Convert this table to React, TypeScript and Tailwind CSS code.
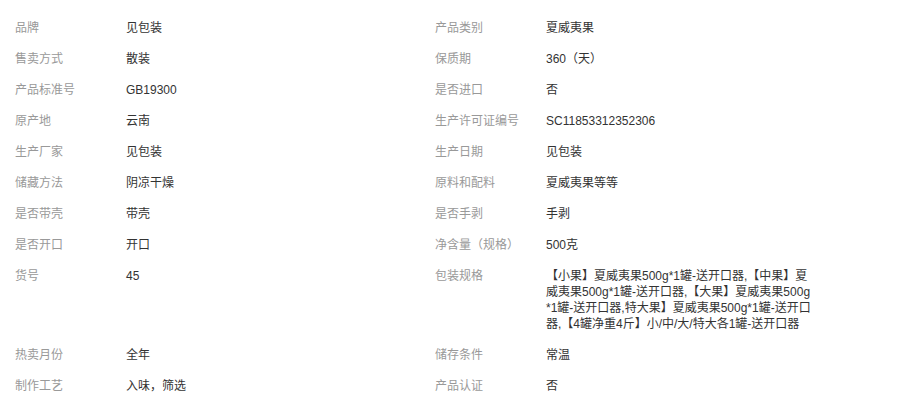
const rows: [string, string, string, string][] = [
  ["品牌", "见包装", "产品类别", "夏威夷果"],
  ["售卖方式", "散装", "保质期", "360（天）"],
  ["产品标准号", "GB19300", "是否进口", "否"],
  ["原产地", "云南", "生产许可证编号", "SC11853312352306"],
  ["生产厂家", "见包装", "生产日期", "见包装"],
  ["储藏方法", "阴凉干燥", "原料和配料", "夏威夷果等等"],
  ["是否带壳", "带壳", "是否手剥", "手剥"],
  ["是否开口", "开口", "净含量（规格）", "500克"],
  [
    "货号",
    "45",
    "包装规格",
    "【小果】夏威夷果500g*1罐-送开口器,【中果】夏威夷果500g*1罐-送开口器,【大果】夏威夷果500g*1罐-送开口器,特大果】夏威夷果500g*1罐-送开口器,【4罐净重4斤】小/中/大/特大各1罐-送开口器",
  ],
  ["热卖月份", "全年", "储存条件", "常温"],
  ["制作工艺", "入味，筛选", "产品认证", "否"],
];

const Cell = ({ label, value }: { label: string; value: string }) => (
  <div className="flex py-[7.5px]">
    <div className="w-[111px] shrink-0 text-[#999]">{label}</div>
    <div className="w-[266px] break-all text-[#333]">{value}</div>
  </div>
);

export default function App() {
  return (
    <div
      className="min-h-[402px] w-[915px] bg-white pl-[15px] pt-[12px] text-[12px] leading-4"
      style={{ fontFamily: '"Liberation Sans", Arial, "Noto Sans CJK SC", sans-serif' }}
    >
      <div className="grid grid-cols-[420px_420px]">
        {rows.map(([l1, v1, l2, v2]) => (
          <div key={l1} className="contents">
            <Cell label={l1} value={v1} />
            <Cell label={l2} value={v2} />
          </div>
        ))}
      </div>
    </div>
  );
}
